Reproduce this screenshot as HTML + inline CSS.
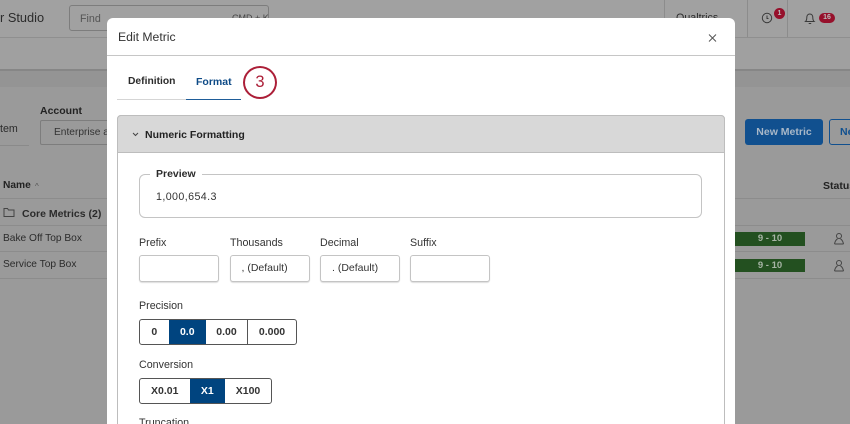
<!DOCTYPE html>
<html>
<head>
<meta charset="utf-8">
<style>
html,body{margin:0;padding:0;width:850px;height:424px;overflow:hidden;background:#9a9a9a;font-family:"Liberation Sans",sans-serif;color:#222}
#w{position:relative;width:850px;height:424px;overflow:hidden;filter:blur(.3px)}
.a{position:absolute;white-space:nowrap}
.t{font-size:10.7px;line-height:14px}
.b{font-weight:bold;font-size:10.5px}
.ln{position:absolute;height:1px}
.in{position:absolute;top:255px;width:78px;height:25px;border:1px solid #c4c4c4;border-radius:3px;background:#fff;box-shadow:0 1px 1px #ddd;font-size:10.5px;line-height:25px;color:#333;box-sizing:content-box}
.seg{position:absolute;height:24px;border:1px solid #555;border-radius:3px;background:#fff;display:flex;overflow:hidden}
.seg div{height:24px;line-height:24px;font-size:10.5px;font-weight:bold;text-align:center;color:#333;box-sizing:border-box}
.seg .on{background:#00447f;color:#fff}
</style>
</head>
<body>
<div id="w">
<!-- background page -->
<div class="a" style="left:0;top:0;width:850px;height:37px;background:#a1a1a1"></div>
<div class="a" style="left:0;top:37px;width:850px;height:34px;background:#a0a0a0;border-top:1px solid #8f8f8f;border-bottom:2px solid #868686;box-sizing:border-box"></div>
<div class="a" style="left:0;top:71px;width:850px;height:16px;background:#949494"></div>
<div class="a" style="left:0;top:10px;font-size:12.800px;line-height:16px;color:#2b2b2b">r Studio</div>
<div class="a" style="left:69px;top:5px;width:200px;height:26px;border:1px solid #7d7d7d;border-radius:3px;box-sizing:border-box"></div>
<div class="a t" style="left:80px;top:12px;color:#555">Find</div>
<div class="a" style="left:232px;top:13px;font-size:9px;line-height:11px;color:#444">CMD + K</div>
<div class="a" style="left:664px;top:0;width:1px;height:37px;background:#8c8c8c"></div>
<div class="a" style="left:747px;top:0;width:1px;height:37px;background:#8c8c8c"></div>
<div class="a" style="left:787px;top:0;width:1px;height:37px;background:#8c8c8c"></div>
<div class="a t" style="left:676px;top:11px;color:#2b2b2b">Qualtrics</div>
<svg class="a" style="left:760px;top:10px" width="80" height="16" viewBox="0 0 80 16" fill="none" stroke="#3a3a3a" stroke-width="1">
<circle cx="7" cy="8" r="4.700"/><path d="M7 5.500V8.500H8.500"/>
<path d="M45.500 11.500c1.200-1 1.300-2 1.300-4 0-2 1.200-3.500 3-3.500s3 1.500 3 3.500c0 2 .1 3 1.300 4ZM48.700 13.500h2.500"/>
</svg>
<div class="a" style="left:774px;top:8px;width:11px;height:11px;border-radius:50%;background:#96102b;color:#bbb;font-size:7px;font-weight:bold;line-height:11px;text-align:center">1</div>
<div class="a" style="left:819px;top:13px;width:16px;height:10px;border-radius:5px;background:#96102b;color:#bbb;font-size:7px;font-weight:bold;line-height:10px;text-align:center">16</div>

<div class="a t" style="left:0;top:122px;color:#2b2b2b">tem</div>
<div class="ln" style="left:0;top:145px;width:29px;background:#8a8a8a"></div>
<div class="a t b" style="left:40px;top:104px;color:#222">Account</div>
<div class="a" style="left:40px;top:120px;width:80px;height:25px;border:1px solid #7d7d7d;border-radius:2px;box-sizing:border-box"></div>
<div class="a t" style="left:54px;top:126px;color:#333;font-size:10.200px">Enterprise a</div>

<div class="a t b" style="left:3px;top:179px;color:#222;font-size:10.200px">Name</div>
<div class="a" style="left:35px;top:180px;font-size:8px;line-height:14px;color:#555">^</div>
<div class="ln" style="left:0;top:198px;width:107px;background:#8c8c8c"></div>
<div class="ln" style="left:0;top:225px;width:107px;background:#8c8c8c"></div>
<div class="ln" style="left:0;top:251px;width:107px;background:#8c8c8c"></div>
<div class="ln" style="left:0;top:278px;width:107px;background:#8c8c8c"></div>
<svg class="a" style="left:3px;top:206px" width="13" height="13" viewBox="0 0 13 13" fill="none" stroke="#444" stroke-width="1"><path d="M1 2.500h3.500l1 1.500h5.500v6.500h-10Z"/></svg>
<div class="a t b" style="left:22px;top:207px;color:#2b2b2b">Core Metrics (2)</div>
<div class="a t" style="left:3px;top:232px;color:#2b2b2b;font-size:10.200px">Bake Off Top Box</div>
<div class="a t" style="left:3px;top:258px;color:#2b2b2b;font-size:10.200px">Service Top Box</div>

<div class="a" style="left:745px;top:119px;width:78px;height:26px;border-radius:3px;background:#11508f;color:#a9b8c8;font-size:10.500px;font-weight:bold;line-height:26px;text-align:center">New Metric</div>
<div class="a" style="left:829px;top:119px;width:40px;height:26px;border:1px solid #11508f;border-radius:3px;box-sizing:border-box;color:#11508f;font-size:10.500px;font-weight:bold;line-height:24px;padding-left:10px">New</div>
<div class="a t b" style="left:823px;top:179px;color:#222">Status</div>
<div class="ln" style="left:735px;top:198px;width:115px;background:#8c8c8c"></div>
<div class="ln" style="left:735px;top:225px;width:115px;background:#8c8c8c"></div>
<div class="ln" style="left:735px;top:251px;width:115px;background:#8c8c8c"></div>
<div class="ln" style="left:735px;top:278px;width:115px;background:#8c8c8c"></div>
<div class="a" style="left:735px;top:232px;width:70px;height:14px;background:#235020;color:#a8b5a6;font-size:9.500px;font-weight:bold;line-height:14px;text-align:center">9 - 10</div>
<div class="a" style="left:735px;top:259px;width:70px;height:13px;background:#235020;color:#a8b5a6;font-size:9.500px;font-weight:bold;line-height:13px;text-align:center">9 - 10</div>
<svg class="a" style="left:832px;top:232px" width="14" height="14" viewBox="0 0 14 14" fill="none" stroke="#444" stroke-width="1"><circle cx="7" cy="4" r="2.500"/><path d="M2.500 12c.5-3 2-4.500 3-5.200M11.500 12c-.5-3-2-4.500-3-5.200M2.500 12h9"/></svg>
<svg class="a" style="left:832px;top:259px" width="14" height="14" viewBox="0 0 14 14" fill="none" stroke="#444" stroke-width="1"><circle cx="7" cy="4" r="2.500"/><path d="M2.500 12c.5-3 2-4.500 3-5.200M11.500 12c-.5-3-2-4.500-3-5.200M2.500 12h9"/></svg>

<!-- modal -->
<div class="a" style="left:107px;top:18px;width:628px;height:420px;background:#fff;border-radius:6px 6px 0 0"></div>
<div class="a" style="left:118px;top:29px;font-size:12.200px;line-height:16px;color:#333">Edit Metric</div>
<svg class="a" style="left:707px;top:33px" width="11" height="11" viewBox="0 0 11 11" fill="none" stroke="#555" stroke-width="1"><path d="M2 1.500l7 7M9 1.500l-7 7"/></svg>
<div class="ln" style="left:107px;top:55px;width:628px;background:#c6c6c6"></div>
<div class="a t b" style="left:128px;top:75px;color:#2b2b2b;font-size:10.300px">Definition</div>
<div class="a t b" style="left:196px;top:75px;color:#0d4a86">Format</div>
<div class="ln" style="left:117px;top:99px;width:69px;background:#d5d5d5"></div>
<div class="a" style="left:186px;top:99px;width:55px;height:1px;background:#1f5d99"></div>
<div class="a" style="left:243px;top:66px;width:34px;height:33px;border:2px solid #ac1f38;border-radius:50%;box-sizing:border-box;background:#fff;color:#ac1f38;font-size:16.500px;line-height:29px;text-align:center">3</div>

<!-- panel -->
<div class="a" style="left:117px;top:115px;width:608px;height:320px;border:1px solid #bdbdbd;border-radius:4px 4px 0 0;box-sizing:border-box"></div>
<div class="a" style="left:117px;top:115px;width:608px;height:38px;background:#d8d8d8;border:1px solid #bdbdbd;border-radius:4px 4px 0 0;box-sizing:border-box"></div>
<svg class="a" style="left:131px;top:131px" width="9" height="7" viewBox="0 0 9 7" fill="none" stroke="#444" stroke-width="1"><path d="M2 2l2.500 2.500L7 2"/></svg>
<div class="a t b" style="left:145px;top:128px;color:#222;font-size:10.500px">Numeric Formatting</div>

<!-- preview -->
<div class="a" style="left:139px;top:174px;width:563px;height:44px;border:1px solid #c4c4c4;border-radius:6px;box-sizing:border-box"></div>
<div class="a t b" style="left:150px;top:167px;background:#fff;padding:0 6px;color:#2b2b2b">Preview</div>
<div class="a t" style="left:156px;top:190px;color:#333;letter-spacing:.4px">1,000,654.3</div>

<div class="a t" style="left:139px;top:236px;color:#333">Prefix</div>
<div class="a t" style="left:230px;top:236px;color:#333">Thousands</div>
<div class="a t" style="left:320px;top:236px;color:#333">Decimal</div>
<div class="a t" style="left:410px;top:236px;color:#333">Suffix</div>
<div class="in" style="left:139px"></div>
<div class="in" style="left:229.500px;text-indent:11px">, (Default)</div>
<div class="in" style="left:320px;text-indent:11px">. (Default)</div>
<div class="in" style="left:410px"></div>

<div class="a t" style="left:139px;top:299px;color:#333">Precision</div>
<div class="seg" style="left:139px;top:319px;width:156px">
<div style="width:28.500px">0</div><div class="on" style="width:37.500px">0.0</div><div style="width:42px;border-right:1px solid #555">0.00</div><div style="width:48px">0.000</div>
</div>
<div class="a t" style="left:139px;top:358px;color:#333">Conversion</div>
<div class="seg" style="left:139px;top:378px;width:131px">
<div style="width:49.500px">X0.01</div><div class="on" style="width:35.500px">X1</div><div style="width:46px">X100</div>
</div>
<div class="a t" style="left:139px;top:416px;color:#333">Truncation</div>
</div>
</body>
</html>
